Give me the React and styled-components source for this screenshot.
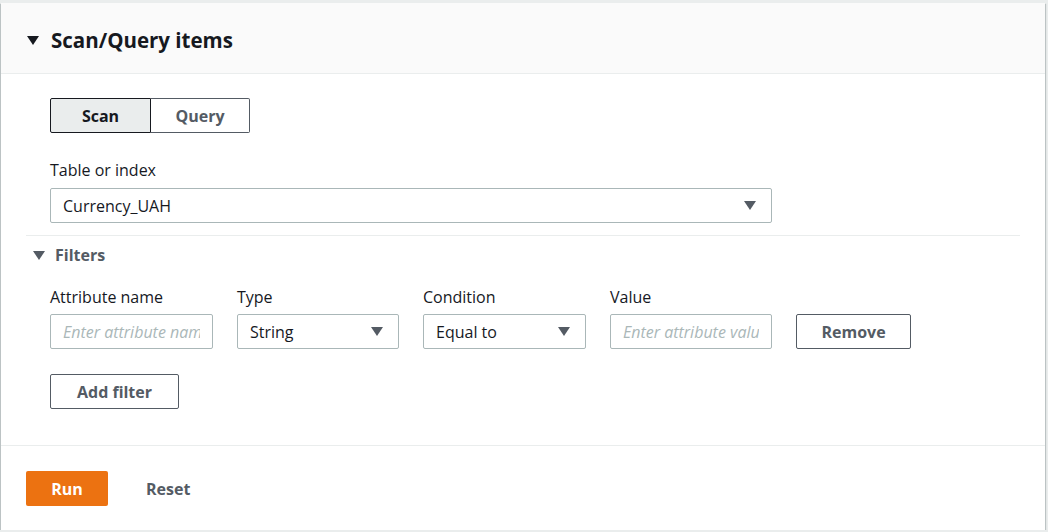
import React from "react";
import styled, {createGlobalStyle} from "styled-components";

const GlobalStyle = createGlobalStyle`
  html, body {
    margin: 0;
    padding: 0;
    background: #eaeded;
  }
  body {
    font-family: "Open Sans", "Noto Sans", sans-serif;
    font-size: 16px;
    color: #16191f;
  }
  * {
    box-sizing: border-box;
  }
`;

const Card = styled.div`
  margin: 3px 0 0 1px;
  width: 1044px;
  height: 527px;
  background: #fff;
  box-shadow: 0 1px 1px 0 rgba(0, 28, 36, 0.3), 1px 1px 1px 0 rgba(0, 28, 36, 0.15),
    -1px 1px 1px 0 rgba(0, 28, 36, 0.15);
  display: flex;
  flex-direction: column;
`;

const Header = styled.div`
  height: 71px;
  padding: 4px 25px 0 26px;
  background: #fafafa;
  border-bottom: 1px solid #eaeded;
  display: flex;
  align-items: center;
  gap: 12px;
`;

const Caret = styled.span`
  display: inline-block;
  width: 0;
  height: 0;
  border-left: ${(p) => p.size / 2}px solid transparent;
  border-right: ${(p) => p.size / 2}px solid transparent;
  border-top: ${(p) => p.size * 0.8}px solid ${(p) => p.color || "#16191f"};
  flex-shrink: 0;
`;

const Title = styled.h2`
  margin: 0;
  font-size: 20.5px;
  font-weight: 700;
  line-height: 26px;
  color: #16191f;
`;

const Body = styled.div`
  padding: 24px 25px 36px 25px;
  border-bottom: 1px solid #eaeded;
`;

const Indent = styled.div`
  padding-left: 24px;
`;

const Segmented = styled.div`
  display: flex;
  width: 200px;
  height: 35px;
  margin-bottom: 26px;
`;

const Segment = styled.button`
  flex: ${(p) => (p.active ? "0 0 101px" : "1")};
  height: 35px;
  font-family: inherit;
  font-size: 16px;
  font-weight: 700;
  color: ${(p) => (p.active ? "#16191f" : "#545b64")};
  background: ${(p) => (p.active ? "#eaeded" : "#fff")};
  border: 1px solid ${(p) => (p.active ? "#16191f" : "#545b64")};
  border-left-width: ${(p) => (p.active ? "1px" : "0")};
  border-radius: ${(p) => (p.active ? "2px 0 0 2px" : "0 2px 2px 0")};
  padding: 0;
  cursor: pointer;
`;

const Label = styled.div`
  font-size: 16px;
  line-height: 22px;
  color: #16191f;
  margin-bottom: ${(p) => p.gap || 6}px;
  white-space: nowrap;
`;

const SelectBox = styled.div`
  width: ${(p) => p.width}px;
  height: 35px;
  border: 1px solid #aab7b8;
  border-radius: 2px;
  background: #fff;
  display: flex;
  align-items: center;
  justify-content: space-between;
  padding: 0 15px 0 12px;
  font-size: 16px;
  color: #16191f;
`;

const TextInput = styled.input`
  width: ${(p) => p.width}px;
  height: 35px;
  border: 1px solid #aab7b8;
  border-radius: 2px;
  padding: 0 12px;
  font-family: inherit;
  font-size: 16px;
  color: #16191f;
  outline: none;
  &::placeholder {
    color: #aab7b8;
    font-style: italic;
  }
`;

const Divider = styled.div`
  height: 1px;
  background: #eaeded;
  margin: 12px 0 8px 0;
`;

const FiltersToggle = styled.div`
  display: flex;
  align-items: center;
  gap: 10px;
  padding-left: 7px;
  height: 22px;
  margin-bottom: 20px;
  font-weight: 700;
  font-size: 16px;
  color: #545b64;
`;

const FilterRow = styled.div`
  display: flex;
  align-items: flex-end;
  gap: 24px;
`;

const Field = styled.div`
  display: flex;
  flex-direction: column;
`;

const Button = styled.button`
  height: 35px;
  width: ${(p) => p.width}px;
  padding: 0;
  font-family: inherit;
  font-size: 16px;
  font-weight: 700;
  color: #545b64;
  background: #fff;
  border: 1px solid #545b64;
  border-radius: 2px;
  cursor: pointer;
  margin-top: ${(p) => p.top || 0}px;
`;

const Footer = styled.div`
  padding: 25px 25px 0 25px;
  display: flex;
  align-items: center;
  gap: 18px;
`;

const PrimaryButton = styled.button`
  width: 82px;
  height: 35px;
  border: none;
  border-radius: 2px;
  background: #ec7211;
  color: #fff;
  font-family: inherit;
  font-size: 16px;
  font-weight: 700;
  cursor: pointer;
`;

const LinkButton = styled.button`
  height: 35px;
  padding: 0 20px;
  border: none;
  background: transparent;
  color: #545b64;
  font-family: inherit;
  font-size: 16px;
  font-weight: 700;
  cursor: pointer;
`;

function Select({width, value}) {
  return (
    <SelectBox width={width}>
      <span>{value}</span>
      <Caret size={12} color="#545b64" />
    </SelectBox>
  );
}

export default function App() {
  return (
    <>
      <GlobalStyle />
      <Card>
        <Header>
          <Caret size={12} />
          <Title>Scan/Query items</Title>
        </Header>
        <Body>
          <Indent>
            <Segmented>
              <Segment active>Scan</Segment>
              <Segment>Query</Segment>
            </Segmented>
            <Label gap={7}>Table or index</Label>
            <Select width={722} value="Currency_UAH" />
          </Indent>
          <Divider />
          <FiltersToggle>
            <Caret size={12} color="#545b64" />
            <span>Filters</span>
          </FiltersToggle>
          <Indent>
            <FilterRow>
              <Field>
                <Label>Attribute name</Label>
                <TextInput width={163} placeholder="Enter attribute name" />
              </Field>
              <Field>
                <Label>Type</Label>
                <Select width={162} value="String" />
              </Field>
              <Field>
                <Label>Condition</Label>
                <Select width={163} value="Equal to" />
              </Field>
              <Field>
                <Label>Value</Label>
                <TextInput width={162} placeholder="Enter attribute value" />
              </Field>
              <Button width={115}>Remove</Button>
            </FilterRow>
            <Button width={129} top={25}>Add filter</Button>
          </Indent>
        </Body>
        <Footer>
          <PrimaryButton>Run</PrimaryButton>
          <LinkButton>Reset</LinkButton>
        </Footer>
      </Card>
    </>
  );
}
